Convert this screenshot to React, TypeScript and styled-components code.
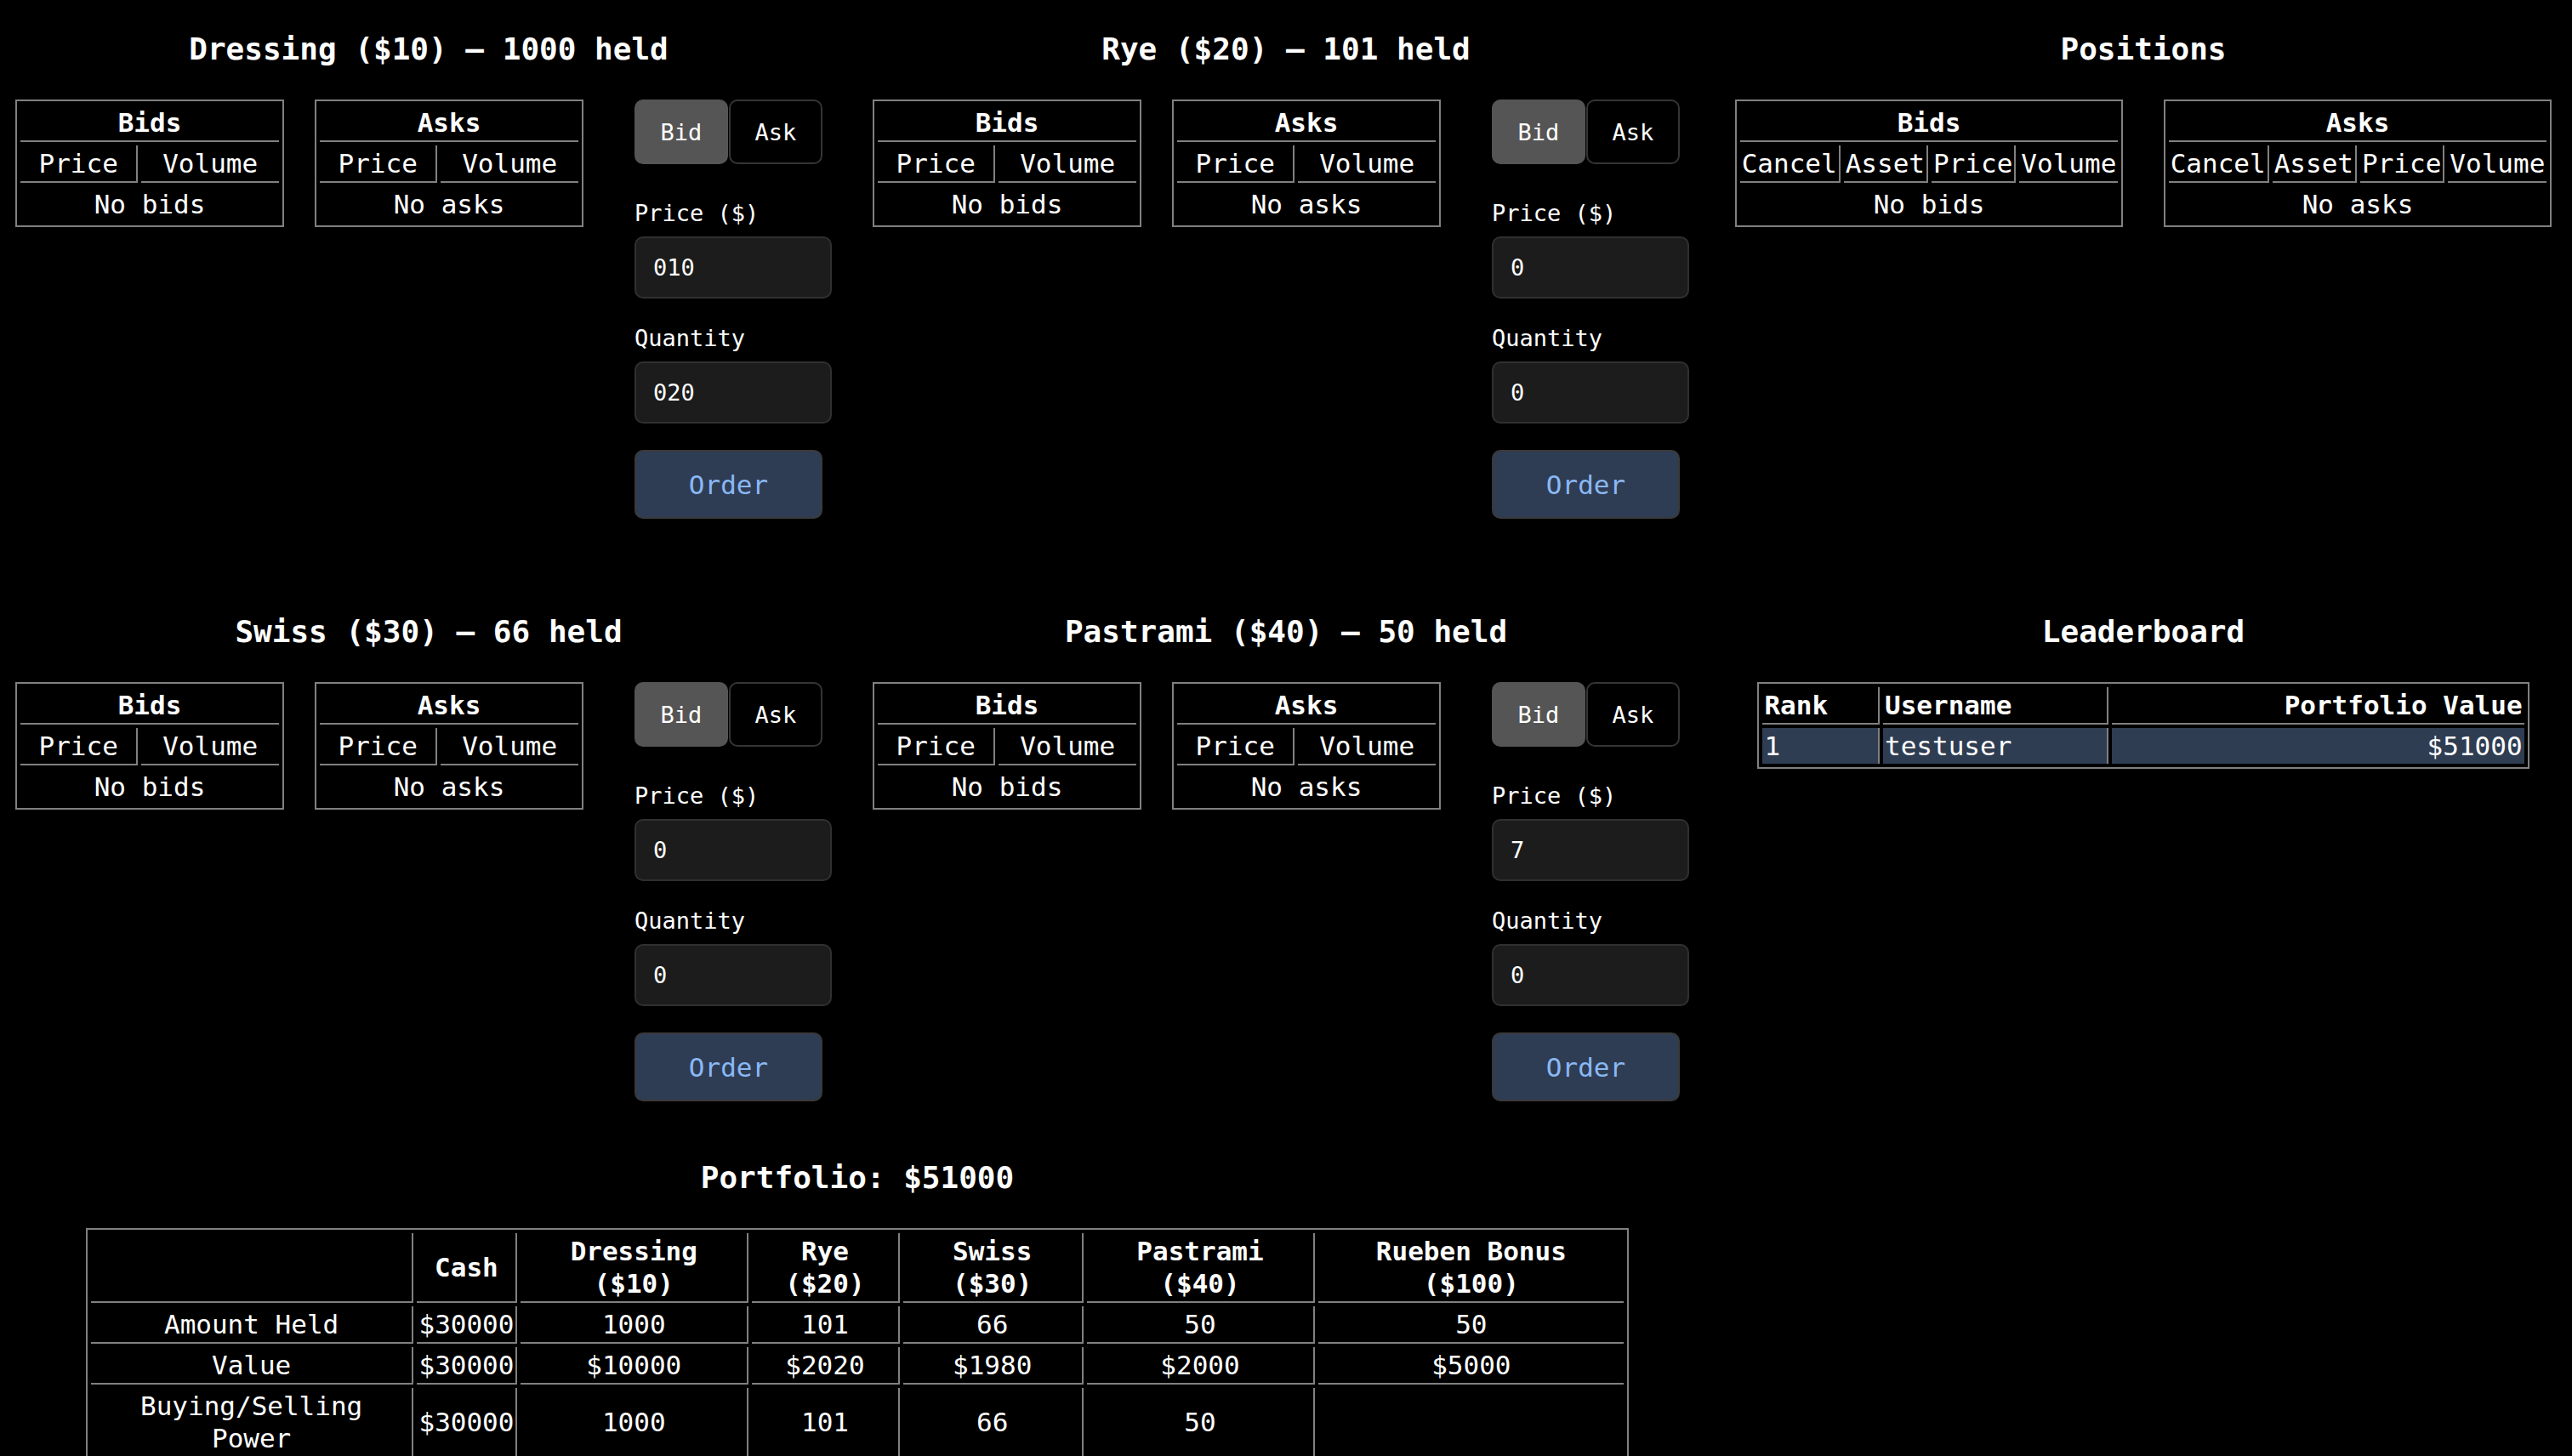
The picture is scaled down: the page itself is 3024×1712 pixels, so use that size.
import React from "react";
import styled, { createGlobalStyle, css } from "styled-components";

const GlobalStyle = createGlobalStyle`
  html { overflow: hidden; background: #000; }
  body {
    margin: 0;
    background: #000;
    color: #fff;
    font-family: "DejaVu Sans Mono", "Liberation Mono", monospace;
    font-size: 31px;
  }
  * { box-sizing: border-box; }
`;

const Page = styled.main`
  display: flex;
  flex-direction: column;
  width: 100%;
`;

const Row = styled.div<{ $tail: number }>`
  display: grid;
  grid-template-columns: repeat(3, 1fr);
  padding-bottom: ${(p) => p.$tail}px;
`;

const Section = styled.section<{ $span?: number }>`
  grid-column: span ${(p) => p.$span ?? 1};
  display: flex;
  flex-direction: column;
  min-width: 0;
`;

const Title = styled.h3`
  margin: 37px 0 38px;
  font-size: 36px;
  line-height: 42px;
  font-weight: 700;
  text-align: center;
`;

const TradeBody = styled.div`
  display: flex;
  align-items: flex-start;
  gap: 36px;
  padding-left: 18px;
`;

const PairBody = styled.div`
  display: flex;
  align-items: flex-start;
  justify-content: space-around;
`;

const Grid = styled.table<{ $w?: string; $fixed?: boolean }>`
  border: 2px solid #808080;
  border-collapse: separate;
  border-spacing: 4px;
  width: ${(p) => p.$w ?? "auto"};
  table-layout: ${(p) => (p.$fixed ? "fixed" : "auto")};
  flex: none;
`;

const CenteredGrid = styled(Grid)`
  margin: 0 auto;
`;

const cellBase = css<{ $align?: string; $hl?: boolean }>`
  padding: 2px;
  line-height: 38px;
  text-align: ${(p) => p.$align ?? "center"};
  vertical-align: middle;
  white-space: nowrap;
  border-right: 2px solid #808080;
  border-bottom: 2px solid #808080;
  background: ${(p) => (p.$hl ? "#2f3d52" : "transparent")};
  &:last-child {
    border-right: none;
  }
  tr:last-child > & {
    border-bottom: none;
  }
`;

const Th = styled.th<{ $align?: string; $hl?: boolean }>`
  ${cellBase};
  font-weight: 700;
`;

const Td = styled.td<{ $align?: string; $hl?: boolean }>`
  ${cellBase};
  font-weight: 400;
`;

const Col = styled.col<{ $pct: number }>`
  width: ${(p) => p.$pct}%;
`;

const OrderForm = styled.form`
  display: flex;
  flex-direction: column;
  align-items: flex-start;
  gap: 31px;
  margin-left: 24px;
  font-size: 27px;
`;

const Toggle = styled.div`
  display: flex;
  gap: 1px;
  margin-bottom: 11px;
`;

const SideButton = styled.button<{ $active: boolean }>`
  width: 110px;
  height: 76px;
  padding: 0;
  border-radius: 10px;
  border: 2px solid ${(p) => (p.$active ? "#555555" : "#353535")};
  background: ${(p) => (p.$active ? "#555555" : "#000000")};
  color: #fff;
  font-family: inherit;
  font-size: 27px;
  font-weight: 400;
`;

const Field = styled.div`
  display: flex;
  flex-direction: column;
  gap: 11px;
`;

const FieldLabel = styled.label`
  line-height: 32px;
  font-size: 27px;
`;

const NumberInput = styled.input`
  width: 232px;
  height: 73px;
  padding: 0 20px;
  border: 2px solid #303030;
  border-radius: 10px;
  background: #1c1c1c;
  color: #fff;
  font-family: inherit;
  font-size: 27px;
  outline: none;
`;

const OrderButton = styled.button`
  width: 221px;
  height: 81px;
  padding: 0;
  border-radius: 10px;
  border: 2px solid #3a3a3a;
  background: #2f3d54;
  color: #8ab8f5;
  font-family: inherit;
  font-size: 31px;
  font-weight: 400;
`;

type Trade = { name: string; price: number; held: number; p: string; q: string };

const trades: Trade[] = [
  { name: "Dressing", price: 10, held: 1000, p: "010", q: "020" },
  { name: "Rye", price: 20, held: 101, p: "0", q: "0" },
  { name: "Swiss", price: 30, held: 66, p: "0", q: "0" },
  { name: "Pastrami", price: 40, held: 50, p: "7", q: "0" },
];

function BookTable({ side }: { side: "Bids" | "Asks" }) {
  return (
    <Grid $w="316px">
      <tbody>
        <tr>
          <Th colSpan={2}>{side}</Th>
        </tr>
        <tr>
          <Td>Price</Td>
          <Td>Volume</Td>
        </tr>
        <tr>
          <Td colSpan={2}>{side === "Bids" ? "No bids" : "No asks"}</Td>
        </tr>
      </tbody>
    </Grid>
  );
}

function TradePanel({ t }: { t: Trade }) {
  return (
    <Section>
      <Title>
        {t.name} (${t.price}) — {t.held} held
      </Title>
      <TradeBody>
        <BookTable side="Bids" />
        <BookTable side="Asks" />
        <OrderForm onSubmit={(e) => e.preventDefault()}>
          <Toggle>
            <SideButton type="button" $active>
              Bid
            </SideButton>
            <SideButton type="button" $active={false}>
              Ask
            </SideButton>
          </Toggle>
          <Field>
            <FieldLabel>Price ($)</FieldLabel>
            <NumberInput value={t.p} readOnly />
          </Field>
          <Field>
            <FieldLabel>Quantity</FieldLabel>
            <NumberInput value={t.q} readOnly />
          </Field>
          <OrderButton type="submit">Order</OrderButton>
        </OrderForm>
      </TradeBody>
    </Section>
  );
}

function PositionTable({ side }: { side: "Bids" | "Asks" }) {
  return (
    <Grid>
      <tbody>
        <tr>
          <Th colSpan={4}>{side}</Th>
        </tr>
        <tr>
          <Td>Cancel</Td>
          <Td>Asset</Td>
          <Td>Price</Td>
          <Td>Volume</Td>
        </tr>
        <tr>
          <Td colSpan={4}>{side === "Bids" ? "No bids" : "No asks"}</Td>
        </tr>
      </tbody>
    </Grid>
  );
}

function Positions() {
  return (
    <Section>
      <Title>Positions</Title>
      <PairBody>
        <PositionTable side="Bids" />
        <PositionTable side="Asks" />
      </PairBody>
    </Section>
  );
}

function Leaderboard() {
  return (
    <Section>
      <Title>Leaderboard</Title>
      <CenteredGrid $w="90%">
        <tbody>
          <tr>
            <Th $align="left">Rank</Th>
            <Th $align="left">Username</Th>
            <Th $align="right">Portfolio Value</Th>
          </tr>
          <tr>
            <Td $align="left" $hl>
              1
            </Td>
            <Td $align="left" $hl>
              testuser
            </Td>
            <Td $align="right" $hl>
              $51000
            </Td>
          </tr>
        </tbody>
      </CenteredGrid>
    </Section>
  );
}

const portfolioCols = [21.35, 6.63, 15.06, 9.76, 11.91, 15.12, 20.17];
const portfolioHead: [string, string][] = [
  ["Dressing", "($10)"],
  ["Rye", "($20)"],
  ["Swiss", "($30)"],
  ["Pastrami", "($40)"],
  ["Rueben Bonus", "($100)"],
];
const portfolioRows: { label: React.ReactNode; cells: string[] }[] = [
  { label: "Amount Held", cells: ["$30000", "1000", "101", "66", "50", "50"] },
  { label: "Value", cells: ["$30000", "$10000", "$2020", "$1980", "$2000", "$5000"] },
  {
    label: (
      <>
        Buying/Selling
        <br />
        Power
      </>
    ),
    cells: ["$30000", "1000", "101", "66", "50", ""],
  },
];

function Portfolio() {
  return (
    <Section $span={2}>
      <Title>Portfolio: $51000</Title>
      <CenteredGrid $w="90%" $fixed>
        <colgroup>
          {portfolioCols.map((c, i) => (
            <Col key={i} $pct={c} />
          ))}
        </colgroup>
        <tbody>
          <tr>
            <Th></Th>
            <Th>Cash</Th>
            {portfolioHead.map(([a, b]) => (
              <Th key={a}>
                {a}
                <br />
                {b}
              </Th>
            ))}
          </tr>
          {portfolioRows.map((r, i) => (
            <tr key={i}>
              <Td>{r.label}</Td>
              {r.cells.map((c, j) => (
                <Td key={j}>{c}</Td>
              ))}
            </tr>
          ))}
        </tbody>
      </CenteredGrid>
    </Section>
  );
}

export default function App() {
  return (
    <>
      <GlobalStyle />
      <Page>
        <Row $tail={75}>
          <TradePanel t={trades[0]} />
          <TradePanel t={trades[1]} />
          <Positions />
        </Row>
        <Row $tail={32}>
          <TradePanel t={trades[2]} />
          <TradePanel t={trades[3]} />
          <Leaderboard />
        </Row>
        <Row $tail={0}>
          <Portfolio />
        </Row>
      </Page>
    </>
  );
}
